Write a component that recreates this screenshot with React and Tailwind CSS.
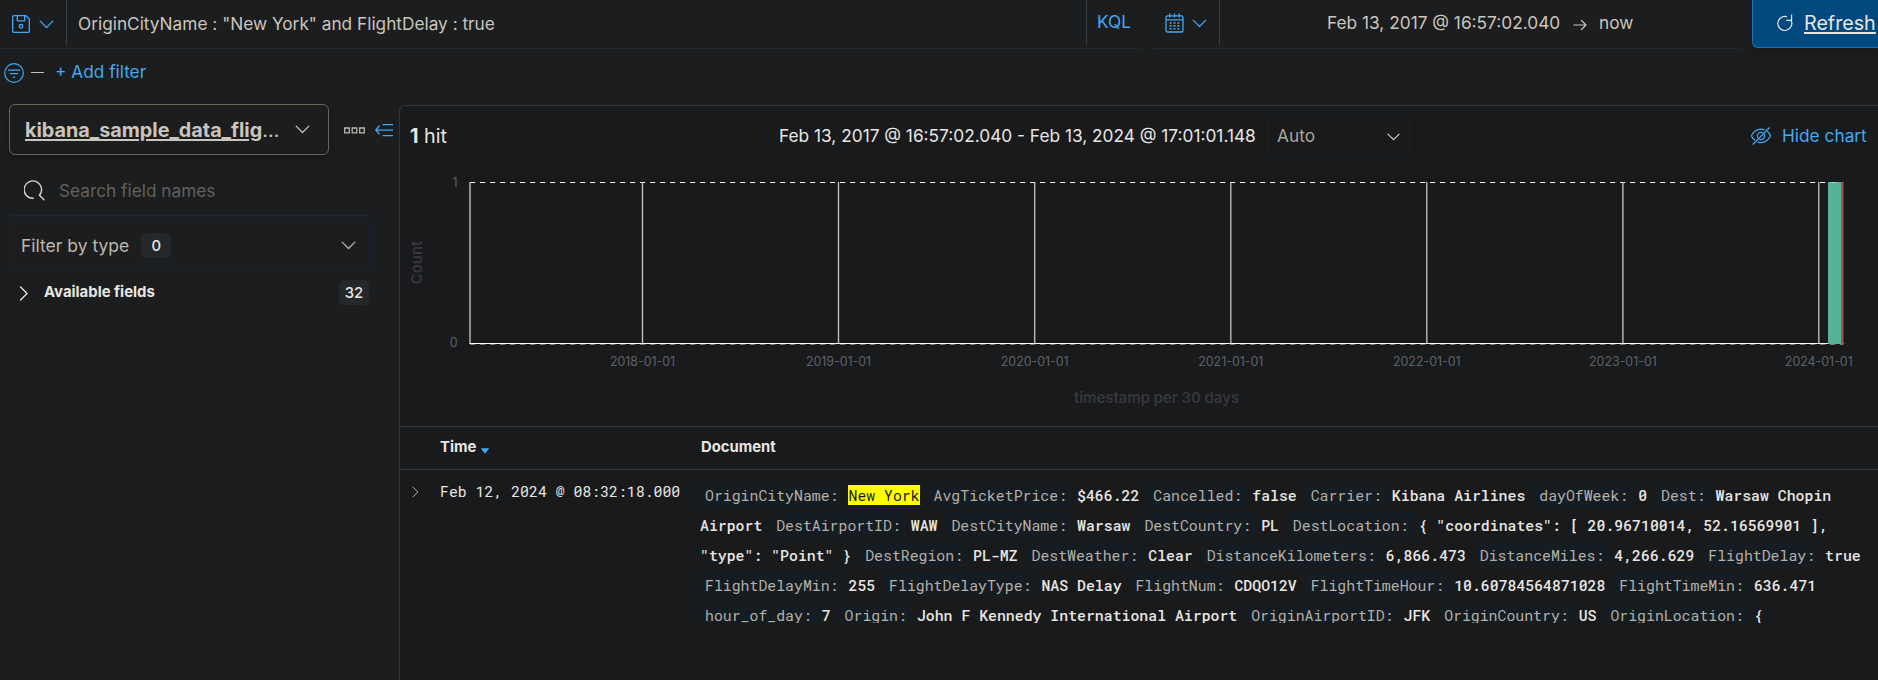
import { Fragment } from "react";

const MONO = "font-['Roboto_Mono','Liberation_Mono',monospace]";

function Chevron({ className = "" }) {
  return (
    <svg viewBox="0 0 16 10" className={className} fill="none" stroke="currentColor" strokeWidth="1.4" strokeLinecap="round" strokeLinejoin="round">
      <path d="M1 1.3 8 8.3l7-7" />
    </svg>
  );
}

function ChevronRight({ className = "" }) {
  return (
    <svg viewBox="0 0 10 16" className={className} fill="none" stroke="currentColor" strokeWidth="1.4" strokeLinecap="round" strokeLinejoin="round">
      <path d="M1.3 1 8.3 8l-7 7" />
    </svg>
  );
}

function SaveIcon() {
  return (
    <svg viewBox="0 0 18 18" className="h-[18px] w-[18px] shrink-0" fill="none" stroke="currentColor" strokeWidth="1.3">
      <path d="M1.900.7h12l3.400 3.400v12a1.200 1.200 0 0 1-1.200 1.200H1.900a1.200 1.200 0 0 1-1.200-1.200V1.900A1.200 1.200 0 0 1 1.900.7Z" />
      <path d="M5.300.7v4.600a.6.6 0 0 0 .6.6h6.200a.6.6 0 0 0 .6-.6V.7" />
      <circle cx="9" cy="11.3" r="1.8" />
    </svg>
  );
}

function CalendarIcon() {
  return (
    <svg viewBox="0 0 19 20" className="h-5 w-[19px] shrink-0" fill="none" stroke="currentColor" strokeWidth="1.3">
      <rect x="1" y="2.8" width="17" height="16.2" rx="1.6" />
      <path d="M1 6.8h17M4.8.4v4M9.5.4v4M14.2.4v4" />
      <path d="M4.6 10h2M8.5 10h2M12.4 10h2M4.6 12.9h2M8.5 12.9h2M12.4 12.9h2M4.6 15.8h2M8.5 15.8h2M12.4 15.8h2" strokeWidth="1.6" />
    </svg>
  );
}

function FilterIcon() {
  return (
    <svg viewBox="0 0 20 20" className="h-5 w-5 shrink-0" fill="none" stroke="currentColor" strokeWidth="1.25">
      <circle cx="10" cy="10" r="9.3" />
      <path d="M4.200 7h11.600M6.200 10.600h7.600M9.300 14.200h1.400" strokeLinecap="round" />
    </svg>
  );
}

function RefreshIcon() {
  return (
    <svg viewBox="0 0 18 18" className="h-[18px] w-[18px] shrink-0" fill="none" stroke="currentColor" strokeWidth="1.2" strokeLinecap="round" strokeLinejoin="round">
      <path d="M10.500 2.700A7 7 0 1 0 15 6.200" />
      <path d="M15.600 1v5.300h-4.900" />
    </svg>
  );
}

function EyeClosedIcon() {
  return (
    <svg viewBox="0 0 20 18" className="h-[18px] w-5 shrink-0" fill="none" stroke="currentColor" strokeWidth="1.25" strokeLinecap="round">
      <path d="M13.2 2.7C12.200 2.300 11.100 2 10 2 5.500 2 2 5.600.8 8.100c-.2.500-.2 1 0 1.500.6 1.200 1.500 2.500 2.800 3.500" />
      <path d="M7 15.200c1 .3 2 .5 3 .5 4.500 0 8-3.600 9.200-6.100.2-.5.200-1 0-1.500-.6-1.200-1.400-2.300-2.600-3.300" />
      <path d="M6.600 10.300a3.600 3.600 0 0 1 4.800-4.600M13.400 7.600a3.600 3.600 0 0 1-4.700 4.700" />
      <path d="M18.300.8 2 17.200" />
    </svg>
  );
}

function SearchIcon() {
  return (
    <svg viewBox="0 0 21 21" className="h-[21px] w-[21px] shrink-0" fill="none" stroke="currentColor" strokeWidth="1.4" strokeLinecap="round">
      <path d="M9.200 18.300A8.700 8.700 0 1 1 15.500 15.200" />
      <path d="m15.500 15.200 4.500 4.600" />
    </svg>
  );
}

function CollapseIcon() {
  return (
    <svg viewBox="0 0 18 14" className="h-[14px] w-[18px] shrink-0" fill="none" stroke="currentColor" strokeWidth="1.25" strokeLinecap="round" strokeLinejoin="round">
      <path d="M8 1.500h9.500M.8 7h16.700M8 12.500h9.500M4.200 3 .8 7l3.400 4" />
    </svg>
  );
}

function TopBar() {
  return (
    <header className="flex h-[49px] items-start text-[17.26px] text-[#cac5be]">
      <div className="flex h-[49px] w-[1140px] border-b border-[#20292d]">
        <div className="flex h-[45px] w-[67px] items-center border-r border-[#3b3e40] pt-[3px] pl-3 text-[#44a8f2]">
          <SaveIcon />
          <Chevron className="ml-[9px] h-[9px] w-[15px]" />
        </div>
        <div className="flex h-[48px] w-[1019px] items-center pl-[11px] whitespace-pre">
          OriginCityName : "New York" and FlightDelay : true
        </div>
        <div className="flex h-[45px] items-center border-l border-[#3b3e40] pb-px pl-[10px] text-[#44a8f2]">KQL</div>
      </div>
      <div className="ml-[14px] flex h-[49px] w-[586px] border-b border-[#20292d]">
        <div className="flex h-[45px] w-[66px] items-center border-r border-[#3b3e40] pt-[1px] pl-[11px] text-[#44a8f2]">
          <CalendarIcon />
          <Chevron className="ml-2 h-[9px] w-[15px]" />
        </div>
        <div className="flex h-[46px] items-center pl-[107px]">
          <span className="w-[246px] text-[17.300px] whitespace-nowrap">Feb 13, 2017 @ 16:57:02.040</span>
          <svg viewBox="0 0 14 12" className="mt-[3px] mr-3 h-3 w-[14px]" fill="none" stroke="currentColor" strokeWidth="1.200" strokeLinecap="round" strokeLinejoin="round">
            <path d="M.8 6h12M8.500 1.500 13 6l-4.500 4.500" />
          </svg>
          <span>now</span>
        </div>
      </div>
      <button className="ml-3 flex h-[48px] w-[126px] items-center overflow-hidden rounded-bl-[6px] border-b border-l border-[#0f77c0] bg-[#024980] pb-px pl-[23px] text-[#e8e6e3] shadow-[0_4px_8px_rgba(0,0,0,0.150)]">
        <RefreshIcon />
        <span className="ml-[10px] text-[19.700px] underline decoration-[1.600px] underline-offset-[2px]">Refresh</span>
      </button>
    </header>
  );
}

function FilterRow() {
  return (
    <div className="flex h-[56px] items-start pt-[13px] pl-1 text-[17.26px] text-[#44a8f2]">
      <div className="flex h-[21px] items-center">
        <FilterIcon />
        <span className="ml-[7px] h-px w-[13px] bg-[#c4c0ba]" />
        <span className="ml-[11px] pb-[2px]">+ Add filter</span>
      </div>
    </div>
  );
}

function Sidebar() {
  return (
    <aside className="w-[399px] shrink-0 pl-[9px] text-[17.26px] text-[#bdb8af]">
      <div className="flex items-center">
        <button className="mt-[-1px] flex h-[51px] w-[320px] items-center justify-between rounded-[6px] border border-[#6b6259] pr-[18px] pl-[15px] text-[#cac5be] shadow-[0_3px_8px_rgba(0,0,0,0.200)]">
          <span className="text-[19.800px] font-bold"><span className="underline decoration-[1.600px] underline-offset-[2px]">kibana_sample_data_flig</span><span className="font-normal">…</span></span>
          <Chevron className="h-[9px] w-[15px]" />
        </button>
        <svg viewBox="0 0 21 7" className="ml-[15px] h-[7px] w-[21px]" fill="none" stroke="#bdb8af" strokeWidth="1.300">
          <path d="M.7 1h4.600v4.800H.7ZM8.200 1h4.600v4.800H8.200ZM15.700 1h4.600v4.800h-4.600Z" />
        </svg>
        <span className="ml-[10px] text-[#44a8f2]"><CollapseIcon /></span>
      </div>
      <div className="mt-[10px] flex h-[51px] w-[360px] items-center border-b border-[#1b2534] pl-[15px]">
        <span className="text-[#d8d4cf]"><SearchIcon /></span>
        <span className="ml-[14px] pt-[2px] text-[#63615d]">Search field names</span>
      </div>
      <div className="mt-1 flex h-[51px] w-[360px] items-center rounded-[2px] border border-[#1b2130] pr-[12px] pl-[11px]">
        <span className="text-[17.500px]">Filter by type</span>
        <span className="ml-3 flex h-[25px] w-[30px] items-center justify-center rounded-[5px] bg-[#24282a] text-[14.800px] font-medium text-[#e8e6e3]">0</span>
        <Chevron className="ml-auto h-[9px] w-[15px]" />
      </div>
      <div className="mt-[9px] flex h-[25px] w-[360px] items-center pl-[10px] text-[#e8e6e3]">
        <ChevronRight className="mt-[2px] h-[15px] w-[10px]" />
        <span className="ml-[15px] pb-px text-[14.900px] font-bold">Available fields</span>
        <span className="ml-auto flex h-[25px] w-[30px] items-center justify-center rounded-[5px] bg-[#24282a] text-[14.800px] font-medium">32</span>
      </div>
    </aside>
  );
}

const TICKS = [
  [642.5, "2018-01-01"],
  [838.5, "2019-01-01"],
  [1034.7, "2020-01-01"],
  [1230.800, "2021-01-01"],
  [1426.800, "2022-01-01"],
  [1622.900, "2023-01-01"],
  [1818.800, "2024-01-01"],
];

function Chart() {
  return (
    <svg viewBox="400 166 1478 260" className="block h-[260px] w-[1478px] shrink-0 font-['Inter',sans-serif]">
      <g fill="none">
        <path d="M470 182.500H1843.500" stroke="#f4f3f1" strokeDasharray="5.200 4.800" strokeWidth="1.200" />
        <path d="M470 344.500H1843.500" stroke="#77777a" strokeDasharray="5.200 4.800" />
        {TICKS.map(([x]) => (
          <path key={x} d={`M${x} 182V343`} stroke="#c9c8c7" strokeWidth="1.300" />
        ))}
        <path d="M470 182V344" stroke="#b5b4b3" strokeWidth="1.500" />
        <path d="M469.500 343.500H1843.500" stroke="#ffffff" />
      </g>
      <rect x="1828" y="182" width="13" height="162" fill="#55b399" />
      <rect x="1841" y="182" width="2.500" height="162" fill="#a8503f" />
      <path d="M1831 182.500h5.500" stroke="#a9d5c8" />
      <g fill="#5d616a" fontSize="12.400">
        <text x="457.500" y="186.500" textAnchor="end">1</text>
        <text x="457.500" y="347" textAnchor="end">0</text>
        {TICKS.map(([x, label]) => (
          <text key={label} x={x} y="366" textAnchor="middle">{label}</text>
        ))}
      </g>
      <g fill="#35373f" fontSize="14.900" fontWeight="600">
        <text transform="translate(422 262.500) rotate(-90)" textAnchor="middle">Count</text>
        <text x="1156.500" y="403" textAnchor="middle">timestamp per 30 days</text>
      </g>
    </svg>
  );
}

const FIELDS = [
  ["OriginCityName:", "New York", true],
  ["AvgTicketPrice:", "$466.22"],
  ["Cancelled:", "false"],
  ["Carrier:", "Kibana Airlines"],
  ["dayOfWeek:", "0"],
  ["Dest:", "Warsaw Chopin Airport"],
  ["DestAirportID:", "WAW"],
  ["DestCityName:", "Warsaw"],
  ["DestCountry:", "PL"],
  ["DestLocation:", '{ "coordinates": [ 20.96710014, 52.16569901 ], "type": "Point" }'],
  ["DestRegion:", "PL-MZ"],
  ["DestWeather:", "Clear"],
  ["DistanceKilometers:", "6,866.473"],
  ["DistanceMiles:", "4,266.629"],
  ["FlightDelay:", "true"],
  ["FlightDelayMin:", "255"],
  ["FlightDelayType:", "NAS Delay"],
  ["FlightNum:", "CDQO12V"],
  ["FlightTimeHour:", "10.60784564871028"],
  ["FlightTimeMin:", "636.471"],
  ["hour_of_day:", "7"],
  ["Origin:", "John F Kennedy International Airport"],
  ["OriginAirportID:", "JFK"],
  ["OriginCountry:", "US"],
  ["OriginLocation:", "{"],
];

function DocumentCell() {
  return (
    <div className={`h-[143px] w-[1171px] overflow-hidden text-[14.830px] leading-[30px] ${MONO}`}>
      {FIELDS.map(([name, value, hit]) => (
        <Fragment key={name}>
          <span className="mr-[5px] rounded-[5px] bg-[#151d23] px-[5px] py-[3px] whitespace-nowrap text-[#b5b0a8]">{name}</span>
          {hit ? (
            <mark className="bg-[#ffff00] text-[#1c1d1e]">{value}</mark>
          ) : (
            <span className="font-medium text-[#e8e6e3]">{value}</span>
          )}{" "}
        </Fragment>
      ))}
    </div>
  );
}

export default function App() {
  return (
    <div className="flex h-[680px] w-[1878px] flex-col overflow-hidden bg-[#1b1d1e] font-['Inter',sans-serif] leading-[24px]">
      <TopBar />
      <FilterRow />
      <div className="flex min-h-0 flex-1">
        <Sidebar />
        <main className="flex w-[1479px] shrink-0 flex-col rounded-tl-[6px] border-t border-l border-[#2c3743] bg-[#191a1b]">
          <div className="flex h-[60px] shrink-0 items-start pt-[10px] text-[17.300px] text-[#e8e6e3]">
            <div className="flex h-[39px] w-[369px] items-center pl-[10px] text-[19.700px] whitespace-pre"><b>1</b> hit</div>
            <div className="flex h-[39px] w-[498px] items-center pl-[10px] whitespace-nowrap">Feb 13, 2017 @ 16:57:02.040 - Feb 13, 2024 @ 17:01:01.148</div>
            <div className="flex h-[40px] w-[143px] items-center justify-between rounded-[2px] border border-[#1a1f29] pr-[9px] pl-[9px] text-[#aaa59d]">
              Auto
              <Chevron className="mt-[2px] h-[8px] w-[13px] text-[#d8d4cf]" />
            </div>
            <div className="ml-[341px] flex h-[39px] items-center gap-[11px] text-[#44a8f2]">
              <EyeClosedIcon />
              <span className="whitespace-nowrap">Hide chart</span>
            </div>
          </div>
          <Chart />
          <div className="flex h-[44px] shrink-0 items-center border-y border-[#30363b] pl-10 text-[14.800px] font-bold text-[#e8e6e3]">
            <div className="flex w-[261px] items-center pb-[2px]">
              Time
              <svg viewBox="0 0 10 6" className="mt-[7px] ml-1 h-[6px] w-[10px]" fill="#44a8f2">
                <path d="M.8.3h8.400L5 5.700Z" />
              </svg>
            </div>
            <div className="pb-[2px]">Document</div>
          </div>
          <div className="flex pt-[10px] text-[#e8e6e3]">
            <ChevronRight className="mt-[6px] ml-3 h-3 w-[7px] shrink-0 text-[#bdb8af]" />
            <div className={`ml-[21px] w-[260px] shrink-0 text-[14.830px] leading-[22px] whitespace-nowrap ${MONO}`}>Feb 12, 2024 @ 08:32:18.000</div>
            <DocumentCell />
          </div>
        </main>
      </div>
    </div>
  );
}
